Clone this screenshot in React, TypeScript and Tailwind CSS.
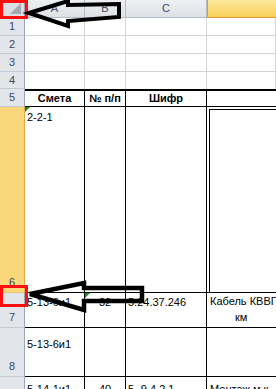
import React from "react";

type Cell = { content?: React.ReactNode; cls?: string };

function RowHead({ label, sel, align }: { label: string; sel?: boolean; align: "center" | "end" }) {
  return (
    <div
      className={
        "w-[25px] shrink-0 flex justify-center border-r border-b text-[11px] leading-[13px] text-[#3b4a5e] " +
        (sel ? "bg-[#f9d77a] border-r-[#e3a83f] border-b-[#e8c46a] " : "bg-[#e2e5e9] border-r-[#9aa5b1] border-b-[#c3c9d1] ") +
        (align === "center" ? "items-center" : "items-end pb-[3px]")
      }
    >
      {label}
    </div>
  );
}

function Row({ h, label, sel, align = "center", cells }: { h: string; label: string; sel?: boolean; align?: "center" | "end"; cells: Cell[] }) {
  const widths = ["w-[60px] shrink-0", "w-[41px] shrink-0", "w-[81px] shrink-0", "flex-1 min-w-0"];
  return (
    <div className={"flex " + h}>
      <RowHead label={label} sel={sel} align={align} />
      {cells.map((c, i) => (
        <div key={i} className={widths[i] + " overflow-hidden whitespace-nowrap " + (c.cls ?? "")}>
          {c.content}
        </div>
      ))}
    </div>
  );
}

const grey = "border-r border-b border-[#d4d4d4]";
const black = "border-r border-b border-black";

export default function App() {
  const emptyGrey: Cell[] = [{ cls: grey }, { cls: grey }, { cls: grey }, { cls: grey }];
  return (
    <div
      className="relative w-[276px] h-[389px] overflow-hidden bg-white text-black"
      style={{ fontFamily: '"Liberation Sans", Arial, sans-serif' }}
    >
      {/* column headers */}
      <div className="flex h-[18px] text-[11px] text-[#3b4a5e]">
        <div className="w-[25px] shrink-0 relative bg-[#dcdfe3] border-r border-b border-[#9aa5b1]">
          <div className="absolute right-[3px] bottom-[3px] w-0 h-0 border-l-[11px] border-l-transparent border-b-[11px] border-b-[#a5a8ad]" />
        </div>
        <div className="w-[60px] shrink-0 flex items-center justify-center bg-gradient-to-b from-[#eef0f3] to-[#dde0e5] border-r border-b border-[#b4bcc6]">A</div>
        <div className="w-[41px] shrink-0 flex items-center justify-center bg-gradient-to-b from-[#eef0f3] to-[#dde0e5] border-r border-b border-[#b4bcc6]">B</div>
        <div className="w-[81px] shrink-0 flex items-center justify-center bg-gradient-to-b from-[#eef0f3] to-[#dde0e5] border-r border-b border-[#b4bcc6]">C</div>
        <div className="flex-1 bg-gradient-to-b from-[#fde79a] to-[#f8cf58] border-l border-b border-[#e09a35]" />
      </div>

      <Row h="h-[18px]" label="1" cells={emptyGrey} />
      <Row h="h-[18px]" label="2" cells={emptyGrey} />
      <Row h="h-[18px]" label="3" cells={emptyGrey} />
      <Row
        h="h-[17px]"
        label="4"
        cells={[
          { cls: "border-r border-[#d4d4d4]" },
          { cls: "border-r border-[#d4d4d4]" },
          { cls: "border-r border-[#d4d4d4]" },
          { cls: "border-r border-[#d4d4d4]" },
        ]}
      />
      <Row
        h="h-[18px]"
        label="5"
        cells={[
          { cls: "border-t-2 border-r border-b border-black flex items-center justify-center font-bold text-[11px]", content: "Смета" },
          { cls: "border-t-2 border-r border-b border-black flex items-center justify-center font-bold text-[11px]", content: "№ п/п" },
          { cls: "border-t-2 border-r border-b border-black flex items-center justify-center font-bold text-[11px]", content: "Шифр" },
          { cls: "border-t-2 border-b border-black" },
        ]}
      />
      <Row
        h="h-[186px]"
        label="6"
        sel
        align="end"
        cells={[
          { cls: black + " relative text-[11px] leading-[13px] pl-[2px] pt-[4px]", content: (
            <>
              <span className="absolute left-0 top-0 w-0 h-0 border-t-[5px] border-t-[#1f8a1f] border-r-[5px] border-r-transparent" />
              2-2-1
            </>
          ) },
          { cls: black },
          { cls: black },
          { cls: "border-b border-black" },
        ]}
      />
      <Row
        h="h-[35px]"
        label="7"
        align="end"
        cells={[
          { cls: black + " text-[11px] leading-[13px] pl-[2px] pt-[3px]", content: "5-13-6и1" },
          { cls: black + " relative text-[11px] leading-[13px] pt-[3px] text-center", content: (
            <>
              <span className="absolute left-0 top-0 w-0 h-0 border-t-[5px] border-t-[#1f8a1f] border-r-[5px] border-r-transparent" />
              32
            </>
          ) },
          { cls: black + " text-[11px] leading-[13px] pl-[2px] pt-[3px]", content: "5.24.37.246" },
          { cls: "border-b border-black text-[11px] leading-[13px] pl-[3px] pt-[2px]", content: (
            <>
              <div>Кабель КВВГ</div>
              <div className="pl-[25px] pt-[3px]">км</div>
            </>
          ) },
        ]}
      />
      <Row
        h="h-[49px]"
        label="8"
        align="end"
        cells={[
          { cls: black + " text-[11px] leading-[13px] pl-[2px] pt-[10px]", content: "5-13-6и1" },
          { cls: black },
          { cls: black },
          { cls: "border-b border-black" },
        ]}
      />
      <Row
        h="h-[35px]"
        label="9"
        align="end"
        cells={[
          { cls: black + " text-[11px] leading-[13px] pl-[2px] pt-[6px]", content: "5-14-1и1" },
          { cls: black + " text-[11px] leading-[13px] pt-[6px] text-center", content: "40" },
          { cls: black + " text-[11px] leading-[13px] pl-[2px] pt-[6px]", content: "5.-9.4.2.1" },
          { cls: "border-b border-black text-[11px] leading-[13px] pl-[3px] pt-[6px]", content: "Монтаж м к" },
        ]}
      />

      {/* picture frame inside D6 */}
      <div className="absolute left-[209px] top-[109px] w-[80px] h-[184px] border-l border-t border-black" />

      {/* red highlight boxes */}
      <div className="absolute left-0 top-0 w-[28px] h-[19px] border-[3px] border-[#ff1010]" />
      <div className="absolute left-0 top-[285px] w-[28px] h-[22px] border-[3px] border-[#ff1010]" />

      {/* arrows */}
      <svg className="absolute left-0 top-0 pointer-events-none" width="276" height="389" viewBox="0 0 276 389">
        <polygon
          points="29,13 68,1 68,5 119,4 119,17 68,21 68,26"
          fill="none"
          stroke="#000"
          strokeWidth="4"
          strokeLinejoin="miter"
        />
        <polygon
          points="30,294 84,283 84,288 142,288 142,301 84,301 84,310"
          fill="none"
          stroke="#000"
          strokeWidth="4.5"
          strokeLinejoin="miter"
        />
      </svg>
    </div>
  );
}
